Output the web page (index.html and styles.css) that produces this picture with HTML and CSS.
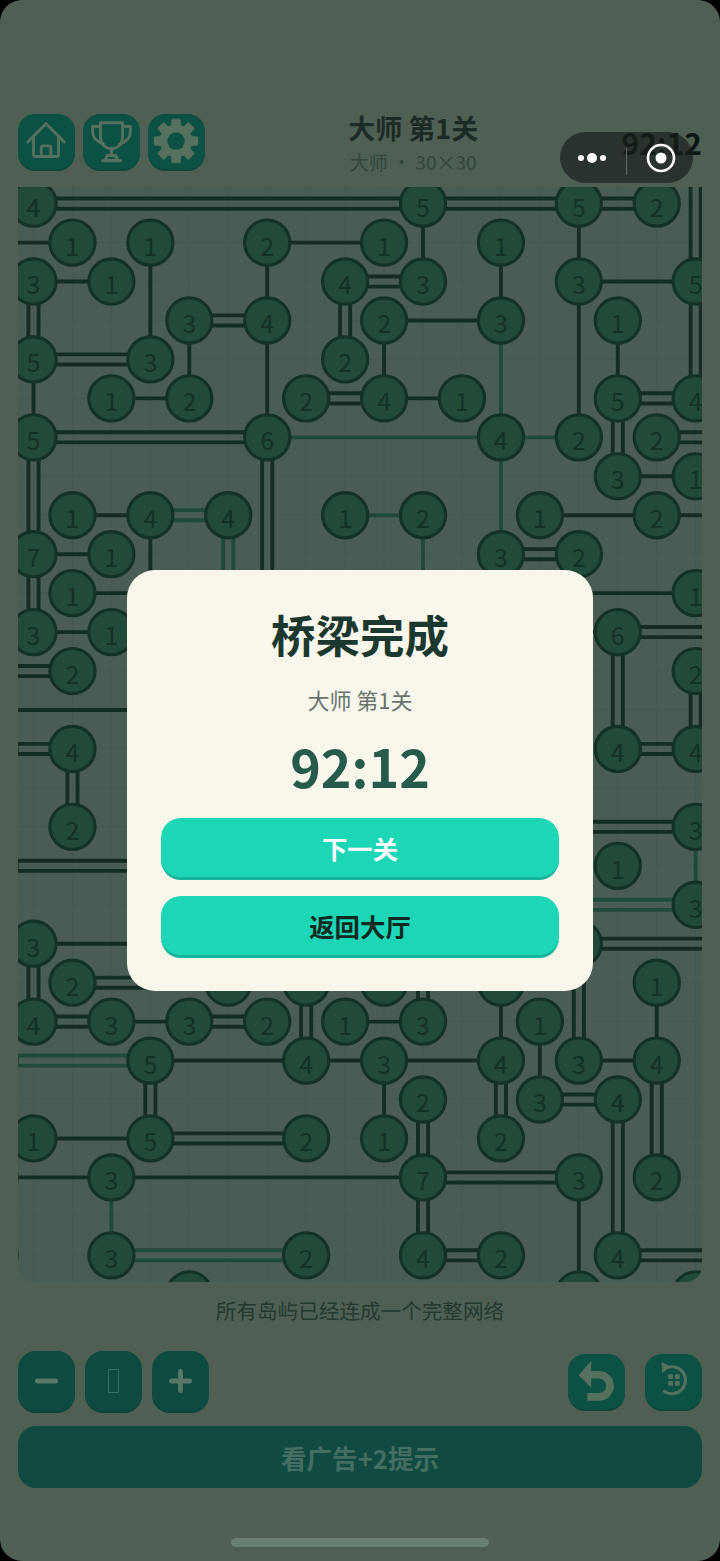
FILE: index.html
```html
<!DOCTYPE html>
<html lang="zh-CN">
<head>
<meta charset="utf-8">
<title>桥梁完成</title>
<link rel="stylesheet" href="styles.css">
</head>
<body>
<div class="page">
  <header class="top">
    <div class="tools">
      <button class="tool">
        <svg class="ico line" viewBox="0 0 57 57"><path d="M9 29 28 10 47 29"/><path d="M15 24V42a2 2 0 0 0 2 2H39a2 2 0 0 0 2-2V24"/><path d="M23 44V35a2 2 0 0 1 2-2h6a2 2 0 0 1 2 2V44"/></svg>
      </button>
      <button class="tool">
        <svg class="ico line" viewBox="0 0 57 57"><path d="M17 9H40V23C40 32 34 36 28.500 36S17 32 17 23Z"/><path d="M17 13H9V19C9 25 14 29 20 31"/><path d="M40 13H48V19C48 25 43 29 37 31"/><path d="M28.500 36V43"/><path d="M24 43H33L35 48H22Z"/><path d="M19 48.500H38"/></svg>
      </button>
      <button class="tool">
        <svg class="ico" viewBox="0 0 57 57">
          <g class="gear">
            <rect x="23" y="5" width="10" height="46" rx="2"/>
            <rect x="23" y="5" width="10" height="46" rx="2" transform="rotate(45 28 28)"/>
            <rect x="23" y="5" width="10" height="46" rx="2" transform="rotate(90 28 28)"/>
            <rect x="23" y="5" width="10" height="46" rx="2" transform="rotate(135 28 28)"/>
            <circle cx="28" cy="28" r="17"/>
          </g>
          <circle class="gear-hole" cx="28" cy="28" r="9"/>
        </svg>
      </button>
    </div>
    <div class="heading">
      <div class="level">大师 第1关</div>
      <div class="size">大师 · 30×30</div>
    </div>
    <div class="clock">92:12</div>
  </header>

  <div class="capsule">
    <svg class="more" viewBox="0 0 34 12"><circle cx="4" cy="6" r="3"/><circle cx="15" cy="6" r="5"/><circle cx="26" cy="6" r="3"/></svg>
    <span class="sep"></span>
    <svg class="target" viewBox="0 0 32 32"><circle class="ring" cx="16" cy="16" r="13"/><circle cx="16" cy="16" r="5.500"/></svg>
  </div>

  <main class="board">
    <svg class="map" viewBox="-3.98 -4.26 175.6 281.1">
      <path class="s" d="M-10 10H10M60 10H90M0 20H20M140 20H170M90 30H120M20 50H40M90 50H110M150 70H170M10 80H30M130 80H180M0 90H20M10 100H170M0 110H20M130 110H150M-10 130H60M0 190H60M20 210H40M80 210H100M30 220H120M140 220H160M0 240H30M-10 250H100M100 0V20M140 0V60M30 10V40M60 10V60M120 10V30M0 40V60M40 30V50M90 30V50M150 30V50M30 80V110M160 200V220M120 200V220M130 210V230M90 220V240M140 250V280"/>
      <path class="s" d="M0-1.300H160M0 1.300H160M80 18.700H100M80 21.300H100M40 28.700H60M40 31.300H60M0 38.700H30M0 41.300H30M70 48.700H90M70 51.300H90M150 48.700H170M150 51.300H170M0 58.700H60M0 61.300H60M160 58.700H180M160 61.300H180M120 88.700H140M120 91.300H140M150 108.700H180M150 111.300H180M-10 118.700H10M-10 121.300H10M-10 138.700H10M-10 141.300H10M150 138.700H170M150 141.300H170M120 158.700H170M120 161.300H170M-10 168.700H50M-10 171.300H50M140 188.700H180M140 191.300H180M10 198.700H50M10 201.300H50M0 208.700H20M0 211.300H20M40 208.700H60M40 211.300H60M130 228.700H150M130 231.300H150M30 238.700H70M30 241.300H70M100 248.700H140M100 251.300H140M100 268.700H120M100 271.300H120M150 268.700H180M150 271.300H180"/>
      <path class="s" d="M-1.300 20V40M1.300 20V40M-1.300 60V110M1.300 60V110M-1.300 190V210M1.300 190V210M8.700 140V160M11.300 140V160M28.700 220V240M31.300 220V240M58.700 60V110M61.300 60V110M68.700 200V220M71.300 200V220M78.700 20V40M81.300 20V40M98.700 200V210M101.300 200V210M98.700 230V270M101.300 230V270M118.700 220V240M121.300 220V240M138.700 190V220M141.300 190V220M148.700 50V70M151.300 50V70M148.700 110V140M151.300 110V140M148.700 230V270M151.300 230V270M158.700 220V250M161.300 220V250M168.700-10V50M171.300-10V50M168.700 120V140M171.300 120V140"/>
      <path class="g" d="M60 60H140M120 30V90M80 80H100M100 80V110M170 160V180M20 250V270"/>
      <path class="g" d="M30 78.700H50M30 81.300H50M48.700 80V110M51.300 80V110M130 178.700H170M130 181.300H170M-10 218.700H30M-10 221.300H30M20 268.700H70M20 271.300H70"/>
      <g class="nodes">
        <circle cx="0" cy="0"/><text x="0" y="0">4</text><circle cx="100" cy="0"/><text x="100" y="0">5</text><circle cx="140" cy="0"/><text x="140" y="0">5</text><circle cx="160" cy="0"/><text x="160" y="0">2</text>
        <circle cx="10" cy="10"/><text x="10" y="10">1</text><circle cx="30" cy="10"/><text x="30" y="10">1</text><circle cx="60" cy="10"/><text x="60" y="10">2</text><circle cx="90" cy="10"/><text x="90" y="10">1</text><circle cx="120" cy="10"/><text x="120" y="10">1</text>
        <circle cx="0" cy="20"/><text x="0" y="20">3</text><circle cx="20" cy="20"/><text x="20" y="20">1</text><circle cx="80" cy="20"/><text x="80" y="20">4</text><circle cx="100" cy="20"/><text x="100" y="20">3</text><circle cx="140" cy="20"/><text x="140" y="20">3</text><circle cx="170" cy="20"/><text x="170" y="20">5</text>
        <circle cx="40" cy="30"/><text x="40" y="30">3</text><circle cx="60" cy="30"/><text x="60" y="30">4</text><circle cx="90" cy="30"/><text x="90" y="30">2</text><circle cx="120" cy="30"/><text x="120" y="30">3</text><circle cx="150" cy="30"/><text x="150" y="30">1</text>
        <circle cx="0" cy="40"/><text x="0" y="40">5</text><circle cx="30" cy="40"/><text x="30" y="40">3</text><circle cx="80" cy="40"/><text x="80" y="40">2</text>
        <circle cx="20" cy="50"/><text x="20" y="50">1</text><circle cx="40" cy="50"/><text x="40" y="50">2</text><circle cx="70" cy="50"/><text x="70" y="50">2</text><circle cx="90" cy="50"/><text x="90" y="50">4</text><circle cx="110" cy="50"/><text x="110" y="50">1</text><circle cx="150" cy="50"/><text x="150" y="50">5</text><circle cx="170" cy="50"/><text x="170" y="50">4</text>
        <circle cx="0" cy="60"/><text x="0" y="60">5</text><circle cx="60" cy="60"/><text x="60" y="60">6</text><circle cx="120" cy="60"/><text x="120" y="60">4</text><circle cx="140" cy="60"/><text x="140" y="60">2</text><circle cx="160" cy="60"/><text x="160" y="60">2</text>
        <circle cx="150" cy="70"/><text x="150" y="70">3</text><circle cx="170" cy="70"/><text x="170" y="70">1</text>
        <circle cx="10" cy="80"/><text x="10" y="80">1</text><circle cx="30" cy="80"/><text x="30" y="80">4</text><circle cx="50" cy="80"/><text x="50" y="80">4</text><circle cx="80" cy="80"/><text x="80" y="80">1</text><circle cx="100" cy="80"/><text x="100" y="80">2</text><circle cx="130" cy="80"/><text x="130" y="80">1</text><circle cx="160" cy="80"/><text x="160" y="80">2</text>
        <circle cx="0" cy="90"/><text x="0" y="90">7</text><circle cx="20" cy="90"/><text x="20" y="90">1</text><circle cx="120" cy="90"/><text x="120" y="90">3</text><circle cx="140" cy="90"/><text x="140" y="90">2</text>
        <circle cx="10" cy="100"/><text x="10" y="100">1</text><circle cx="170" cy="100"/><text x="170" y="100">1</text>
        <circle cx="0" cy="110"/><text x="0" y="110">3</text><circle cx="20" cy="110"/><text x="20" y="110">1</text><circle cx="150" cy="110"/><text x="150" y="110">6</text>
        <circle cx="10" cy="120"/><text x="10" y="120">2</text><circle cx="170" cy="120"/><text x="170" y="120">2</text>
        <circle cx="-10" cy="140"/><circle cx="10" cy="140"/><text x="10" y="140">4</text><circle cx="150" cy="140"/><text x="150" y="140">4</text><circle cx="170" cy="140"/><text x="170" y="140">4</text>
        <circle cx="10" cy="160"/><text x="10" y="160">2</text><circle cx="170" cy="160"/><text x="170" y="160">3</text>
        <circle cx="-10" cy="170"/><circle cx="150" cy="170"/><text x="150" y="170">1</text>
        <circle cx="170" cy="180"/><text x="170" y="180">3</text>
        <circle cx="0" cy="190"/><text x="0" y="190">3</text><circle cx="140" cy="190"/>
        <circle cx="10" cy="200"/><text x="10" y="200">2</text><circle cx="50" cy="200"/><circle cx="70" cy="200"/><circle cx="90" cy="200"/><circle cx="120" cy="200"/><circle cx="160" cy="200"/><text x="160" y="200">1</text>
        <circle cx="0" cy="210"/><text x="0" y="210">4</text><circle cx="20" cy="210"/><text x="20" y="210">3</text><circle cx="40" cy="210"/><text x="40" y="210">3</text><circle cx="60" cy="210"/><text x="60" y="210">2</text><circle cx="80" cy="210"/><text x="80" y="210">1</text><circle cx="100" cy="210"/><text x="100" y="210">3</text><circle cx="130" cy="210"/><text x="130" y="210">1</text>
        <circle cx="-10" cy="220"/><circle cx="30" cy="220"/><text x="30" y="220">5</text><circle cx="70" cy="220"/><text x="70" y="220">4</text><circle cx="90" cy="220"/><text x="90" y="220">3</text><circle cx="120" cy="220"/><text x="120" y="220">4</text><circle cx="140" cy="220"/><text x="140" y="220">3</text><circle cx="160" cy="220"/><text x="160" y="220">4</text>
        <circle cx="100" cy="230"/><text x="100" y="230">2</text><circle cx="130" cy="230"/><text x="130" y="230">3</text><circle cx="150" cy="230"/><text x="150" y="230">4</text>
        <circle cx="0" cy="240"/><text x="0" y="240">1</text><circle cx="30" cy="240"/><text x="30" y="240">5</text><circle cx="70" cy="240"/><text x="70" y="240">2</text><circle cx="90" cy="240"/><text x="90" y="240">1</text><circle cx="120" cy="240"/><text x="120" y="240">2</text>
        <circle cx="-10" cy="250"/><circle cx="20" cy="250"/><text x="20" y="250">3</text><circle cx="100" cy="250"/><text x="100" y="250">7</text><circle cx="140" cy="250"/><text x="140" y="250">3</text><circle cx="160" cy="250"/><text x="160" y="250">2</text>
        <circle cx="-10" cy="270"/><circle cx="20" cy="270"/><text x="20" y="270">3</text><circle cx="70" cy="270"/><text x="70" y="270">2</text><circle cx="100" cy="270"/><text x="100" y="270">4</text><circle cx="120" cy="270"/><text x="120" y="270">2</text><circle cx="150" cy="270"/><text x="150" y="270">4</text>
        <circle cx="40" cy="280"/><circle cx="140" cy="280"/><circle cx="170" cy="280"/>
      </g>
    </svg>
  </main>

  <p class="status">所有岛屿已经连成一个完整网络</p>

  <div class="controls">
    <div class="zoom">
      <button class="zbtn"><svg class="ico line thick" viewBox="0 0 57 62"><path d="M19 31H38"/></svg></button>
      <button class="zbtn"><span class="tofu"></span></button>
      <button class="zbtn"><svg class="ico line thick" viewBox="0 0 57 62"><path d="M19 31H38M28.500 21V41"/></svg></button>
    </div>
    <div class="history">
      <button class="tool">
        <svg class="ico" viewBox="0 0 57 57"><path class="fill" d="M23 7 10 22 23 35Z"/><path class="undo" d="M20 21.500H31a11.500 11.500 0 0 1 0 23H19"/></svg>
      </button>
      <button class="tool">
        <svg class="ico" viewBox="0 0 57 57"><path class="arc" d="M20 15A14 14 0 1 1 18 38"/><path class="fill" d="M16 8 25 13 17 20Z"/><rect class="fill" x="23" y="21" width="5" height="5" rx="1"/><rect class="fill" x="30" y="21" width="5" height="5" rx="1"/><rect class="fill" x="23" y="28" width="5" height="5" rx="1"/><rect class="fill" x="30" y="28" width="5" height="5" rx="1"/></svg>
      </button>
    </div>
  </div>

  <button class="ad">看广告+2提示</button>
  <div class="home-bar"></div>
</div>

<div class="overlay">
  <section class="card">
    <h1 class="card-title">桥梁完成</h1>
    <p class="card-level">大师 第1关</p>
    <p class="card-time">92:12</p>
    <button class="cta next">下一关</button>
    <button class="cta back">返回大厅</button>
  </section>
</div>
</body>
</html>
```

FILE: styles.css
```css
* { box-sizing: border-box; }
html, body { margin: 0; padding: 0; background: #000; }
body { width: 720px; height: 1561px; overflow: hidden; font-family: "Noto Sans CJK SC", "Noto Sans", sans-serif; }
button { font-family: inherit; border: 0; padding: 0; margin: 0; }

.page {
  position: relative;
  width: 720px;
  height: 1561px;
  padding: 114px 18px 0;
  background: #4f5f54;
  border-radius: 22px;
  display: flex;
  flex-direction: column;
}

.top { display: flex; align-items: flex-start; height: 57px; margin-bottom: 16px; }
.tools { display: flex; gap: 8px; }
.tool {
  width: 57px; height: 57px;
  border-radius: 17px;
  background: #0d5044;
  border-bottom: 2px solid #0c473c;
  display: flex; align-items: center; justify-content: center;
}
.ico { width: 100%; height: 100%; display: block; }
.line { fill: none; stroke: #55705f; stroke-width: 3; stroke-linecap: round; stroke-linejoin: round; }
.thick { stroke-width: 5; stroke: #5a7669; }
.gear { fill: #55705f; }
.gear-hole { fill: #0d5044; }
.fill { fill: #55705f; }
.undo { fill: none; stroke: #55705f; stroke-width: 8; }
.arc { fill: none; stroke: #55705f; stroke-width: 3.2; }

.heading { flex: 1; text-align: center; margin-top: -2px; }
.level { font-size: 27px; font-weight: 700; line-height: 32px; color: #1c2b25; }
.size { font-size: 19px; line-height: 26px; margin-top: 5px; color: #34463c; }
.clock { font-size: 30px; font-weight: 700; line-height: 60px; color: #0c1612; margin-top: -2px; }

.capsule {
  position: absolute; left: 560px; top: 132px;
  width: 133px; height: 51px;
  border-radius: 26px;
  background: rgba(24, 30, 27, .68);
  display: flex; align-items: center;
}
.more { position: absolute; left: 17px; top: 20px; width: 34px; height: 12px; fill: #fff; }
.sep { position: absolute; left: 66px; top: 16px; width: 1px; height: 27px; background: #5b6a62; }
.target { position: absolute; left: 85px; top: 10px; width: 32px; height: 32px; fill: #fff; }
.ring { fill: none; stroke: #fff; stroke-width: 2.6; }

.board {
  height: 1095px;
  border-radius: 0 0 16px 16px;
  overflow: hidden;
  background-color: #4a5d54;
  background-image:
    linear-gradient(to right, #465951 1px, transparent 1px),
    linear-gradient(to bottom, #465951 1px, transparent 1px);
  background-size: 38.95px 38.95px;
  background-position: 15px 16px;
}
.map { display: block; width: 684px; height: 1095px; }
.s, .g { fill: none; stroke-width: 1; }
.s { stroke: #152c25; }
.g { stroke: #1f4a37; }
.nodes circle { r: 5.800px; fill: #214a38; stroke: #143125; stroke-width: .8; }
.nodes text {
  font-size: 6.400px;
  fill: #143125;
  text-anchor: middle;
  dominant-baseline: central;
  transform: translateY(.5px);
}

.status { height: 56px; margin: 0 0 13px; font-size: 20.600px; line-height: 56px; text-align: center; color: #243830; }

.controls { display: flex; justify-content: space-between; align-items: center; height: 62px; margin-bottom: 13px; }
.zoom { display: flex; gap: 10px; }
.zbtn {
  width: 57px; height: 62px;
  border-radius: 18px;
  background: #0e4a40;
  border-bottom: 2px solid #0d4339;
  display: flex; align-items: center; justify-content: center;
}
.tofu { width: 11px; height: 24px; border: 1px solid #2f6f62; }
.history { display: flex; gap: 20px; }

.ad {
  height: 62px;
  border-radius: 18px;
  background: #104a40;
  font-size: 25.600px; font-weight: 700;
  color: #456d61;
  flex: none;
}
.home-bar { width: 258px; height: 9px; border-radius: 5px; background: #6a7d72; margin: 50px auto 0; }

.overlay {
  position: fixed; inset: 0;
  display: flex; align-items: center; justify-content: center;
}
.card {
  width: 466px; height: 421px;
  padding: 32px 34px 34px;
  border-radius: 28px;
  background: #f9f6ec;
  display: flex; flex-direction: column;
  text-align: center;
}
.card-title { margin: 0; font-size: 44.500px; font-weight: 700; line-height: 64px; color: #1b382f; }
.card-level { margin: 17px 0 0; font-size: 22px; line-height: 32px; color: #66756c; }
.card-time { margin: 21px 0 22px; font-size: 52px; font-weight: 700; line-height: 60px; color: #265a4b; }
.cta {
  height: 62px;
  border-radius: 20px;
  background: #1cd6b6;
  border-bottom: 3px solid #17b39a;
  font-size: 25.400px; font-weight: 700;
  flex: none;
}
.next { color: #fff; margin-bottom: 16px; }
.back { color: #0f2a22; }
```
